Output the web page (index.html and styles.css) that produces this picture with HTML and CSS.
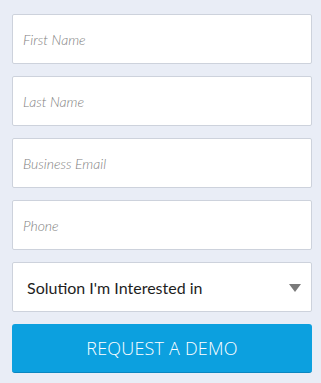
FILE: index.html
```html
<!DOCTYPE html>
<html lang="en">
<head>
    <meta charset="UTF-8">
    <title>Request a Demo</title>
    <link rel="stylesheet" href="styles.css">
</head>
<body>
    <form class="demo-form">
        <input class="field" type="text" placeholder="First Name">
        <input class="field" type="text" placeholder="Last Name">
        <input class="field" type="email" placeholder="Business Email">
        <input class="field" type="tel" placeholder="Phone">
        <div class="select-wrap">
            <select class="field select">
                <option>Solution I'm Interested in</option>
            </select>
            <span class="arrow"></span>
        </div>
        <button class="submit-btn" type="button">Request a Demo</button>
    </form>
</body>
</html>
```

FILE: styles.css
```css
body {
    margin: 0;
    background: #e9edf6;
    font-family: 'Lato', sans-serif;
}

.demo-form {
    display: flex;
    flex-direction: column;
    gap: 12px;
    padding: 14px 9px 0 12px;
}

.field {
    box-sizing: border-box;
    width: 300px;
    height: 50px;
    margin: 0;
    padding: 0 10px;
    background: #fff;
    border: 1px solid #cdd2dc;
    border-radius: 2px;
    font-family: 'Lato', sans-serif;
    font-size: 14px;
    color: #222;
    outline: none;
}

.field::placeholder {
    color: #7f7f7f;
    font-style: italic;
    font-weight: 300;
}

.select-wrap {
    position: relative;
    width: 300px;
}

.select {
    -webkit-appearance: none;
    appearance: none;
    padding: 0 14px;
    font-size: 16px;
    color: #1e1e1e;
}

.arrow {
    position: absolute;
    right: 11px;
    top: 22px;
    width: 0;
    height: 0;
    border-left: 6px solid transparent;
    border-right: 6px solid transparent;
    border-top: 8px solid #7a7a7a;
    pointer-events: none;
}

.submit-btn {
    width: 300px;
    height: 49px;
    margin: 0;
    background: #0ca0df;
    border: none;
    border-bottom: 1px solid #0a86c0;
    border-radius: 3px;
    color: #fff;
    font-family: 'Open Sans', sans-serif;
    font-weight: 300;
    font-size: 18px;
    text-transform: uppercase;
    letter-spacing: 0.2px;
    cursor: pointer;
}
```
